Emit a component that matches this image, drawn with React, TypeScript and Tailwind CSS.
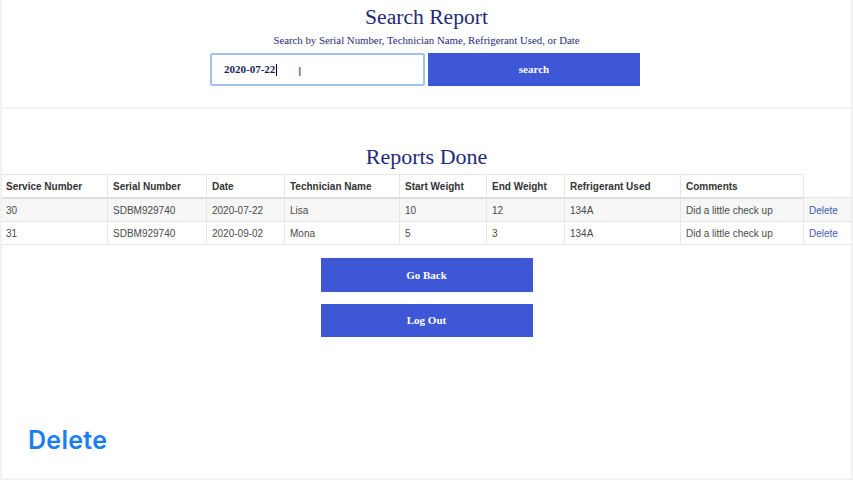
import React from "react";

const rows = [
  ["30", "SDBM929740", "2020-07-22", "Lisa", "10", "12", "134A", "Did a little check up"],
  ["31", "SDBM929740", "2020-09-02", "Mona", "5", "3", "134A", "Did a little check up"],
];
const headers = ["Service Number", "Serial Number", "Date", "Technician Name", "Start Weight", "End Weight", "Refrigerant Used", "Comments"];
const widths = [107, 99, 78, 115, 87, 78, 116, 123, 50];

export default function App() {
  return (
    <div className="w-[853px] h-[480px] bg-white overflow-hidden relative border-l-2 border-r-2 border-b-2 border-[#f1f1f1]" style={{ fontFamily: '"Liberation Serif", serif' }}>
      <div className="flex flex-col items-center pt-[4px] h-[109px] border-b-2 border-[#f3f3f3]">
        <h1 className="text-[21.6px] leading-[26px] text-[#1e2b78]">Search Report</h1>
        <p className="text-[10.8px] leading-[14px] mt-[3px] text-[#1e2b78]">Search by Serial Number, Technician Name, Refrigerant Used, or Date</p>
        <div className="flex gap-[3px] mt-[6px] ml-[-3px]">
          <div className="w-[215px] h-[33px] border-2 border-[#9fc3ee] rounded-[2px] flex items-center pl-[12px] relative">
            <span className="text-[11px] font-bold text-[#1b2456]">2020-07-22</span>
            <span className="w-px h-[12px] bg-black ml-px"></span>
            <span className="absolute left-[86px] top-[8px] text-[12px] text-[#555]" style={{ fontFamily: '"DejaVu Sans", sans-serif' }}>I</span>
          </div>
          <button className="w-[212px] h-[33px] bg-[#3d57d6] text-white text-[11px] font-bold">search</button>
        </div>
      </div>
      <h2 className="text-center text-[22px] leading-[26px] text-[#1e2b78] mt-[35px]">Reports Done</h2>
      <table className="mt-[4px] ml-[-2px] border-collapse text-[10px] text-[#333]" style={{ fontFamily: '"Liberation Sans", Arial, sans-serif', tableLayout: "fixed", width: 853 }}>
        <colgroup>
          {widths.map((w, i) => <col key={i} style={{ width: w }} />)}
        </colgroup>
        <thead>
          <tr className="h-[23px]">
            {headers.map((h) => (
              <th key={h} className="text-left font-bold px-[5px] pt-[1px] border border-[#e6e6e6] border-b-2 border-b-[#dedede]">{h}</th>
            ))}
            <th className="border-l border-[#e6e6e6]"></th>
          </tr>
        </thead>
        <tbody>
          {rows.map((r, i) => (
            <tr key={i} className={i === 0 ? "h-[24px] bg-[#f6f6f6]" : "h-[23px] bg-white"}>
              {r.map((c, j) => (
                <td key={j} className="px-[5px] pt-[1px] border border-[#e6e6e6] text-[#4a4a4a]">{c}</td>
              ))}
              <td className="px-[5px] pt-[1px] border border-[#e6e6e6] text-[#3b5db0]">Delete</td>
            </tr>
          ))}
        </tbody>
      </table>
      <div className="flex flex-col items-center gap-[12px] mt-[13px]">
        <button className="w-[212px] h-[34px] bg-[#3d57d6] text-white text-[11px] font-bold">Go Back</button>
        <button className="w-[212px] h-[33px] bg-[#3d57d6] text-white text-[11px] font-bold">Log Out</button>
      </div>
      <div className="absolute left-[26px] top-[422px] text-[25px] font-semibold tracking-[0.3px] text-[#1a7ef2]" style={{ fontFamily: 'Inter, sans-serif' }}>Delete</div>
    </div>
  );
}
